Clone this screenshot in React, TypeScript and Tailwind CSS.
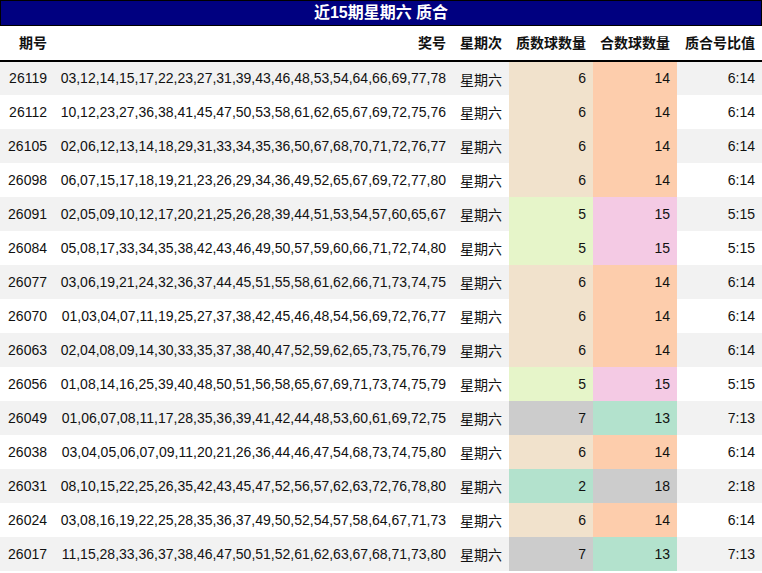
const rows: [string, string, number, number][] = [
  ["26119","03,12,14,15,17,22,23,27,31,39,43,46,48,53,54,64,66,69,77,78",6,14],
  ["26112","10,12,23,27,36,38,41,45,47,50,53,58,61,62,65,67,69,72,75,76",6,14],
  ["26105","02,06,12,13,14,18,29,31,33,34,35,36,50,67,68,70,71,72,76,77",6,14],
  ["26098","06,07,15,17,18,19,21,23,26,29,34,36,49,52,65,67,69,72,77,80",6,14],
  ["26091","02,05,09,10,12,17,20,21,25,26,28,39,44,51,53,54,57,60,65,67",5,15],
  ["26084","05,08,17,33,34,35,38,42,43,46,49,50,57,59,60,66,71,72,74,80",5,15],
  ["26077","03,06,19,21,24,32,36,37,44,45,51,55,58,61,62,66,71,73,74,75",6,14],
  ["26070","01,03,04,07,11,19,25,27,37,38,42,45,46,48,54,56,69,72,76,77",6,14],
  ["26063","02,04,08,09,14,30,33,35,37,38,40,47,52,59,62,65,73,75,76,79",6,14],
  ["26056","01,08,14,16,25,39,40,48,50,51,56,58,65,67,69,71,73,74,75,79",5,15],
  ["26049","01,06,07,08,11,17,28,35,36,39,41,42,44,48,53,60,61,69,72,75",7,13],
  ["26038","03,04,05,06,07,09,11,20,21,26,36,44,46,47,54,68,73,74,75,80",6,14],
  ["26031","08,10,15,22,25,26,35,42,43,45,47,52,56,57,62,63,72,76,78,80",2,18],
  ["26024","03,08,16,19,22,25,28,35,36,37,49,50,52,54,57,58,64,67,71,73",6,14],
  ["26017","11,15,28,33,36,37,38,46,47,50,51,52,61,62,63,67,68,71,73,80",7,13],
];
const c = (n: number) =>
  ({ 6: "bg-[#f1e2cc]", 14: "bg-[#fdcdac]", 5: "bg-[#e6f5c9]", 15: "bg-[#f4cae4]", 7: "bg-[#cccccc]", 13: "bg-[#b3e2cd]", 2: "bg-[#b3e2cd]", 18: "bg-[#cccccc]" } as Record<number, string>)[n];

export default function App() {
  return (
    <div className="w-[762px] h-[573px] overflow-hidden bg-white text-[14px] text-[#111]" style={{ fontFamily: '"Liberation Sans", Arial, "Noto Sans CJK SC", sans-serif' }}>
      <div className="h-[26px] bg-[#000080] border border-black text-white font-bold text-[16px] flex items-center justify-center">近15期星期六 质合</div>
      <table className="w-full border-collapse">
        <thead>
          <tr className="h-[35px] border-b-2 border-black font-bold">
            <th className="w-[54px] text-right pr-[7px]">期号</th>
            <th className="text-right pr-[7px]">奖号</th>
            <th className="w-[56px] text-right pr-[7px]">星期次</th>
            <th className="w-[84px] text-right pr-[7px]">质数球数量</th>
            <th className="w-[84px] text-right pr-[7px]">合数球数量</th>
            <th className="w-[85px] text-right pr-[7px]">质合号比值</th>
          </tr>
        </thead>
        <tbody>
          {rows.map((r, i) => (
            <tr key={r[0]} className={`h-[34px] ${i % 2 === 0 ? "bg-[#f2f2f2]" : "bg-white"}`}>
              <td className="text-right pr-[7px]">{r[0]}</td>
              <td className="text-right pr-[7px] whitespace-nowrap">{r[1]}</td>
              <td className="text-right pr-[7px] pt-[3px]">星期六</td>
              <td className={`text-right pr-[7px] ${c(r[2])}`}>{r[2]}</td>
              <td className={`text-right pr-[7px] ${c(r[3])}`}>{r[3]}</td>
              <td className="text-right pr-[7px]">{r[2]}:{r[3]}</td>
            </tr>
          ))}
        </tbody>
      </table>
    </div>
  );
}
